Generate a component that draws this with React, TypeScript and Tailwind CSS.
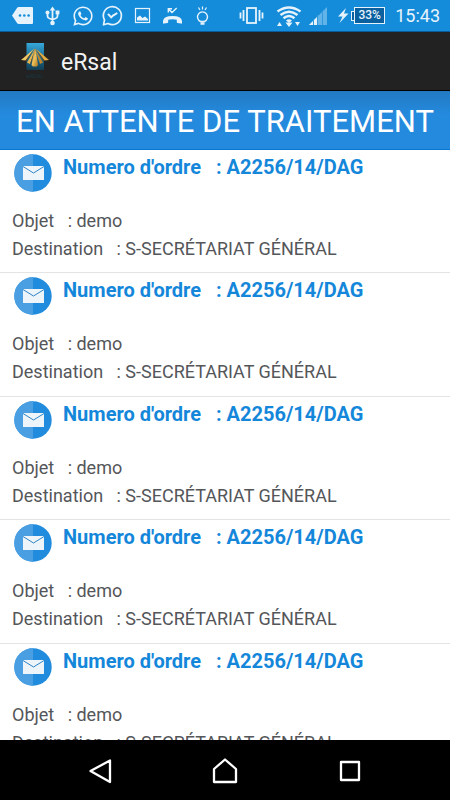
import type { ReactNode } from 'react';
import { FaWhatsapp } from 'react-icons/fa';

const mails = [
  { id: 1, numero: 'A2256/14/DAG', objet: 'demo', destination: 'S-SECRÉTARIAT GÉNÉRAL' },
  { id: 2, numero: 'A2256/14/DAG', objet: 'demo', destination: 'S-SECRÉTARIAT GÉNÉRAL' },
  { id: 3, numero: 'A2256/14/DAG', objet: 'demo', destination: 'S-SECRÉTARIAT GÉNÉRAL' },
  { id: 4, numero: 'A2256/14/DAG', objet: 'demo', destination: 'S-SECRÉTARIAT GÉNÉRAL' },
  { id: 5, numero: 'A2256/14/DAG', objet: 'demo', destination: 'S-SECRÉTARIAT GÉNÉRAL' },
];

function StatusIcon({ children }: { children: ReactNode }) {
  return (
    <svg viewBox="0 0 30 31" className="w-[30px] h-[31px] shrink-0" fill="none" stroke="none" aria-hidden="true">
      {children}
    </svg>
  );
}

function StatusBar() {
  return (
    <div className="h-8 shrink-0 flex items-center justify-between bg-[#148cda] border-b border-[#0b5c9c] text-[#e6f3fc] pl-2 pr-[10px]">
      <div className="flex items-center">
        {/* Message */}
        <StatusIcon>
          <path d="M4 15.500 L9 8 Q9.500 7 11 7 H24 Q25 7 25 8 V23 Q25 24 24 24 H11 Q9.500 24 9 23 Z" fill="currentColor" />
          <g fill="#148cda">
            <circle cx="12" cy="15.500" r="1.300" />
            <circle cx="16.300" cy="15.500" r="1.300" />
            <circle cx="20.600" cy="15.500" r="1.300" />
          </g>
        </StatusIcon>
        {/* USB */}
        <StatusIcon>
          <path d="M14.500 9 V23 M9.500 13 V16 Q9.500 18 11.500 18.500 L14.500 19.500 L17.500 18.500 Q19.500 18 19.500 16 V13" stroke="currentColor" strokeWidth="1.800" />
          <path d="M14.500 6.500 L17.300 10.500 H11.700 Z" fill="currentColor" />
          <circle cx="9.500" cy="12.500" r="2" fill="currentColor" />
          <rect x="17.600" y="10.500" width="3.800" height="3.800" fill="currentColor" />
          <circle cx="14.500" cy="23" r="2.300" fill="currentColor" />
        </StatusIcon>
        <div className="w-[30px] flex justify-center">
          <FaWhatsapp className="w-[22px] h-[22px]" />
        </div>
        {/* Messenger */}
        <StatusIcon>
          <path d="M6.500 20 A9 9 0 1 1 10 23.500 L5.500 24.800 Z" stroke="currentColor" strokeWidth="1.700" strokeLinejoin="round" />
          <path d="M10 13.800 L13.200 17.400 L15 15.600 L19.300 13" stroke="currentColor" strokeWidth="2" />
        </StatusIcon>
        {/* Picture */}
        <StatusIcon>
          <rect x="7.500" y="8.500" width="14" height="14" stroke="currentColor" strokeWidth="1.200" />
          <path d="M9 20.500 V17.500 L12 15.500 L14.500 18 L17 16.500 L20 19 V20.500 Z" fill="currentColor" />
        </StatusIcon>
        {/* Missed call */}
        <StatusIcon>
          <path d="M5 21 Q5.500 16 14.500 16 Q23.500 16 24 21 V23 Q24 23.800 23 23.600 L19.500 23 Q18.800 22.800 18.800 22 V19.800 Q14.500 18.600 10.200 19.800 V22 Q10.200 22.800 9.500 23 L6 23.600 Q5 23.800 5 23 Z" fill="currentColor" />
          <path d="M10.300 12.500 V8.700 H14 M10.300 8.700 L14 12.500 L18.700 8" stroke="currentColor" strokeWidth="1.400" />
        </StatusIcon>
        {/* Bulb */}
        <StatusIcon>
          <path d="M12.500 21.500 A5 5 0 1 1 16.500 21.500 Z" stroke="currentColor" strokeWidth="1.400" />
          <path d="M12.500 23.500 H16.500" stroke="currentColor" strokeWidth="2.500" />
          <path d="M14.500 6.500 V9.500 M10.500 7.500 L12 10 M18.500 7.500 L17 10" stroke="currentColor" strokeWidth="1.200" />
        </StatusIcon>
      </div>

      <div className="flex items-center">
        {/* Vibrate */}
        <StatusIcon>
          <rect x="10" y="8" width="9" height="15" stroke="currentColor" strokeWidth="1.800" />
          <path d="M6.500 10 V21 M3.500 12.500 V18.500 M22.500 10 V21 M25.500 12.500 V18.500" stroke="currentColor" strokeWidth="1.800" />
        </StatusIcon>
        {/* Wi-Fi */}
        <svg viewBox="0 0 34 31" className="w-[34px] h-[31px] ml-[7px]" fill="none" aria-hidden="true">
          <path d="M3.500 11.500 Q15 3.500 26.500 11.500 M6.500 15 Q15 8.500 23.500 15 M9.500 18.300 Q15 13.800 20.500 18.300" stroke="currentColor" strokeWidth="2.400" />
          <path d="M12 20.500 Q15 18 18 20.500 L15 23 Z" fill="currentColor" />
          <path d="M3 26 L5.500 22 L8 26 Z M11.500 22.500 H18.500 L15 27 Z M21 22 H26 L23.500 26 Z" fill="currentColor" />
        </svg>
        {/* Signal */}
        <svg viewBox="0 0 30 31" className="w-[30px] h-[31px]" aria-hidden="true">
          <path d="M1 25 L19 7 V25 Z" fill="#62b3e7" />
          <path d="M1 25 L9 17 V25 Z" fill="currentColor" />
          <path d="M5.500 19 V25 M9.500 15 V25 M14.500 11 V25" stroke="#2f9ade" strokeWidth="1" />
        </svg>
        {/* Battery */}
        <svg viewBox="0 0 12 31" className="w-3 h-[31px]" aria-hidden="true">
          <path d="M8 8 L0 16.500 H4.500 L1.500 23 L10.500 13.500 H6 Z" fill="currentColor" />
        </svg>
        <span className="w-[3px] h-[10px] ml-px border border-r-0 border-current bg-[#0b60a0]" />
        <span className="w-[31px] h-[17px] border border-current bg-[#0b60a0] font-medium text-[12px] leading-[15px] text-center">33%</span>
        <time className="ml-[10px] pt-px text-[18px] leading-6">15:43</time>
      </div>
    </div>
  );
}

function Logo() {
  return (
    <svg viewBox="0 0 30 38" className="w-[30px] h-[38px]" role="img" aria-label="eRsal">
      <defs>
        <linearGradient id="sky" x1="0" y1="0" x2="0" y2="1">
          <stop offset="0" stopColor="#36a9db" />
          <stop offset="0.550" stopColor="#1b6a90" />
          <stop offset="1" stopColor="#123d52" />
        </linearGradient>
        <linearGradient id="gold" x1="0" y1="0" x2="1" y2="1">
          <stop offset="0" stopColor="#9a6a20" />
          <stop offset="0.500" stopColor="#f0c25c" />
          <stop offset="1" stopColor="#a8731f" />
        </linearGradient>
      </defs>
      <rect x="6.500" y="1" width="17.500" height="27" fill="url(#sky)" />
      <path d="M14.500 6.500 L1 18 L5.500 18.500 Z" fill="#f2c765" />
      <path d="M14.500 6.500 L5.500 18.500 L6.500 19 Z" fill="#6b4513" />
      <path d="M15 7 L7 20.500 L10 22 Z" fill="#e9b750" />
      <path d="M15 7 L10 22 L11 21 Z" fill="#6b4513" />
      <path d="M14.500 7 L11.500 23 L13 24.500 H17 L18 23 L15.500 7 Z" fill="url(#gold)" />
      <path d="M15 7 L20 22 L23 20.500 Z" fill="#c08429" />
      <path d="M15.500 6.500 L24.500 18.500 L29 18 Z" fill="#e0a941" />
      <path d="M15.500 6.500 L24.500 18.500 L23.500 19 Z" fill="#6b4513" />
      <text x="15" y="36" textAnchor="middle" fontSize="6" fill="#17363f">eRSAL</text>
    </svg>
  );
}

function MailIcon() {
  return (
    <svg viewBox="0 0 38 38" className="w-[38px] h-[38px] shrink-0" aria-hidden="true">
      <circle cx="19" cy="19" r="18.700" fill="#218bdd" />
      <path d="M19 0.300 A18.700 18.700 0 0 0 19 37.700 Z" fill="#4a9fe3" />
      <rect x="9" y="12" width="21" height="14" fill="#edf4fa" />
      <path d="M9 12.500 L19.500 19 L30 12.500" fill="none" stroke="#2d84c6" strokeWidth="1" />
    </svg>
  );
}

export default function App() {
  return (
    <div className="h-screen flex flex-col bg-white overflow-hidden font-['Roboto','Liberation_Sans',sans-serif]">
      <StatusBar />

      <header className="h-[59px] shrink-0 flex items-center gap-[11px] pl-5 bg-[#222222] border-b border-black">
        <Logo />
        <span className="pt-[3px] text-[23px] leading-7 text-[#f3f3f3]">eRsal</span>
      </header>

      <h1 className="h-[59px] shrink-0 flex items-center justify-center pt-1 bg-linear-to-b from-[#2279c1] to-[#248ade] to-40% border-b border-[#0878d4] text-white text-[31px] leading-10 whitespace-nowrap">
        EN ATTENTE DE TRAITEMENT
      </h1>

      <ul className="flex-1 min-h-0 overflow-y-auto [scrollbar-width:none]">
        {mails.map((mail) => (
          <li key={mail.id} className="h-[123px] even:h-[124px] pt-1 border-b border-[#e4e4e4] text-[18px] leading-7 text-[#54565a] whitespace-pre">
            <div className="flex items-start gap-[11px] pl-[14px]">
              <MailIcon />
              <h2 className="font-bold text-[20px] leading-[26px] text-[#1487da]">{`Numero d'ordre   : ${mail.numero}`}</h2>
            </div>
            <div className="pl-3 pt-[15px]">
              <p>{`Objet   : ${mail.objet}`}</p>
              <p>{`Destination   : ${mail.destination}`}</p>
            </div>
          </li>
        ))}
      </ul>

      <nav className="h-[60px] shrink-0 flex items-center justify-center gap-[97px] bg-black text-white">
        <button aria-label="Retour">
          <svg viewBox="0 0 28 28" className="w-7 h-7" fill="none" stroke="currentColor" strokeWidth="2.300" strokeLinejoin="round">
            <path d="M4.500 15 L24 4.500 V26 Z" />
          </svg>
        </button>
        <button aria-label="Accueil">
          <svg viewBox="0 0 28 28" className="w-7 h-7" fill="none" stroke="currentColor" strokeWidth="2.300" strokeLinejoin="round">
            <path d="M3 13 L14 3.500 L25 13 V26 H3 Z" />
          </svg>
        </button>
        <button aria-label="Applications récentes">
          <svg viewBox="0 0 28 28" className="w-7 h-7" fill="none" stroke="currentColor" strokeWidth="2.300" strokeLinejoin="round">
            <rect x="5" y="6" width="18" height="18" />
          </svg>
        </button>
      </nav>
    </div>
  );
}
